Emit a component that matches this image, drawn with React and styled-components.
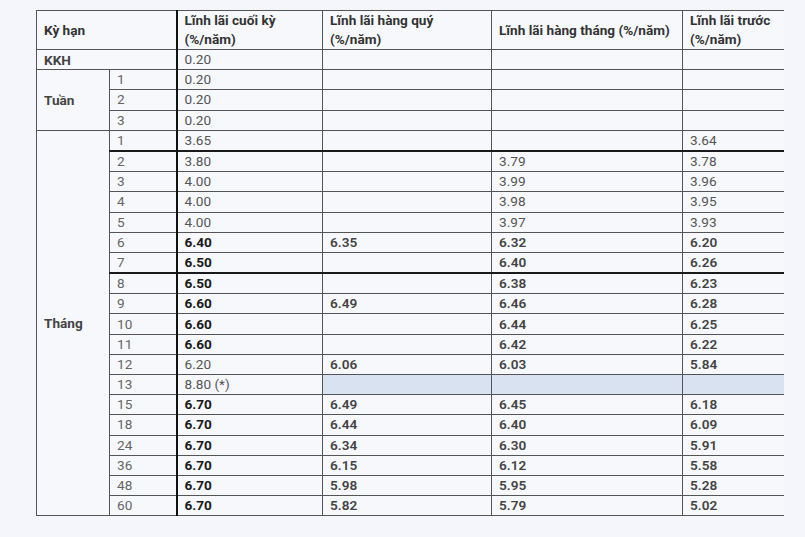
import React from "react";
import styled, { createGlobalStyle } from "styled-components";

const GlobalStyle = createGlobalStyle`
  html, body {
    margin: 0;
    padding: 0;
    background: #f4f6fb;
  }
  body {
    font-family: Roboto, "Noto Sans", "Liberation Sans", sans-serif;
  }
`;

const Page = styled.div`
  width: 805px;
  height: 537px;
  padding: 10px 0 0 36px;
  box-sizing: border-box;
  background: #f4f6fb;
`;

const Clip = styled.div`
  width: 748px;
  overflow: hidden;
`;

const Table = styled.table`
  width: 760px;
  border-collapse: collapse;
  table-layout: fixed;
  font-size: 13.6px;
  color: #555;
  background: #f6f8fc;
`;

const Head = styled.th`
  text-align: left;
  font-weight: 700;
  color: #333;
  padding: 0 7px;
  height: 38px;
  line-height: 19px;
  border: 1px solid #555;
  border-left-width: ${(p) => (p.$thick ? "2px" : "1px")};
  border-left-color: ${(p) => (p.$thick ? "#111" : "#555")};
`;

const Row = styled.tr`
  & > td {
    border-top: ${(p) =>
      p.$thick ? "2px solid #1a1a1a" : p.$light ? "1px solid #9a9a9a" : "1px solid #555"};
  }
`;

const Cell = styled.td`
  padding: 0 7px;
  height: 19.2px;
  line-height: 19px;
  white-space: nowrap;
  border-left: ${(p) => (p.$thick ? "2px solid #111" : "1px solid #555")};
  border-right: 1px solid #555;
  border-bottom: 1px solid #555;
  background: ${(p) => (p.$shade ? "#d9e2f0" : "transparent")};
  font-weight: ${(p) => (p.$strong ? 700 : p.$mid ? 600 : 400)};
  color: ${(p) => (p.$strong ? "#1a1a1a" : p.$mid ? "#444" : "#555")};
`;

const Label = styled.td`
  padding: 0 7px;
  font-weight: 700;
  color: #444;
  vertical-align: middle;
  border: 1px solid #555;
`;

const Term = styled(Cell)`
  color: #666;
`;

const weeks = ["1", "2", "3"];

// [kỳ hạn, cuối kỳ, bold?, hàng quý, hàng tháng, lãi trước, border, shaded?]
const months = [
  ["1", "3.65", false, "", "", "3.64", ""],
  ["2", "3.80", false, "", "3.79", "3.78", "thick"],
  ["3", "4.00", false, "", "3.99", "3.96", ""],
  ["4", "4.00", false, "", "3.98", "3.95", ""],
  ["5", "4.00", false, "", "3.97", "3.93", "light"],
  ["6", "6.40", true, "6.35", "6.32", "6.20", ""],
  ["7", "6.50", true, "", "6.40", "6.26", "light"],
  ["8", "6.50", true, "", "6.38", "6.23", "thick"],
  ["9", "6.60", true, "6.49", "6.46", "6.28", "light"],
  ["10", "6.60", true, "", "6.44", "6.25", ""],
  ["11", "6.60", true, "", "6.42", "6.22", "light"],
  ["12", "6.20", false, "6.06", "6.03", "5.84", ""],
  ["13", "8.80 (*)", false, "", "", "", "", true],
  ["15", "6.70", true, "6.49", "6.45", "6.18", ""],
  ["18", "6.70", true, "6.44", "6.40", "6.09", ""],
  ["24", "6.70", true, "6.34", "6.30", "5.91", ""],
  ["36", "6.70", true, "6.15", "6.12", "5.58", ""],
  ["48", "6.70", true, "5.98", "5.95", "5.28", ""],
  ["60", "6.70", true, "5.82", "5.79", "5.02", ""],
];

const isMid = (v) => v !== "" && parseFloat(v) >= 5;

const App = () => {
  return (
    <Page>
      <GlobalStyle />
      <Clip>
        <Table>
          <colgroup>
            <col style={{ width: 73 }} />
            <col style={{ width: 67 }} />
            <col style={{ width: 146 }} />
            <col style={{ width: 169 }} />
            <col style={{ width: 191 }} />
            <col style={{ width: 114 }} />
          </colgroup>
          <thead>
            <tr>
              <Head colSpan={2}>Kỳ hạn</Head>
              <Head $thick>
                Lĩnh lãi cuối kỳ
                <br />
                (%/năm)
              </Head>
              <Head>
                Lĩnh lãi hàng quý
                <br />
                (%/năm)
              </Head>
              <Head>Lĩnh lãi hàng tháng (%/năm)</Head>
              <Head>
                Lĩnh lãi trước
                <br />
                (%/năm)
              </Head>
            </tr>
          </thead>
          <tbody>
            <Row>
              <Label colSpan={2}>KKH</Label>
              <Cell $thick>0.20</Cell>
              <Cell />
              <Cell />
              <Cell />
            </Row>
            {weeks.map((w, i) => (
              <Row key={"w" + w}>
                {i === 0 && <Label rowSpan={3}>Tuần</Label>}
                <Term>{w}</Term>
                <Cell $thick>0.20</Cell>
                <Cell />
                <Cell />
                <Cell />
              </Row>
            ))}
            {months.map((m, i) => (
              <Row key={"m" + m[0]} $thick={m[6] === "thick"} $light={m[6] === "light"}>
                {i === 0 && <Label rowSpan={months.length}>Tháng</Label>}
                <Term>{m[0]}</Term>
                <Cell $thick $strong={m[2]}>
                  {m[1]}
                </Cell>
                <Cell $mid={isMid(m[3])} $shade={m[7]}>
                  {m[3]}
                </Cell>
                <Cell $mid={isMid(m[4])} $shade={m[7]}>
                  {m[4]}
                </Cell>
                <Cell $mid={isMid(m[5])} $shade={m[7]}>
                  {m[5]}
                </Cell>
              </Row>
            ))}
          </tbody>
        </Table>
      </Clip>
    </Page>
  );
};

export default App;
